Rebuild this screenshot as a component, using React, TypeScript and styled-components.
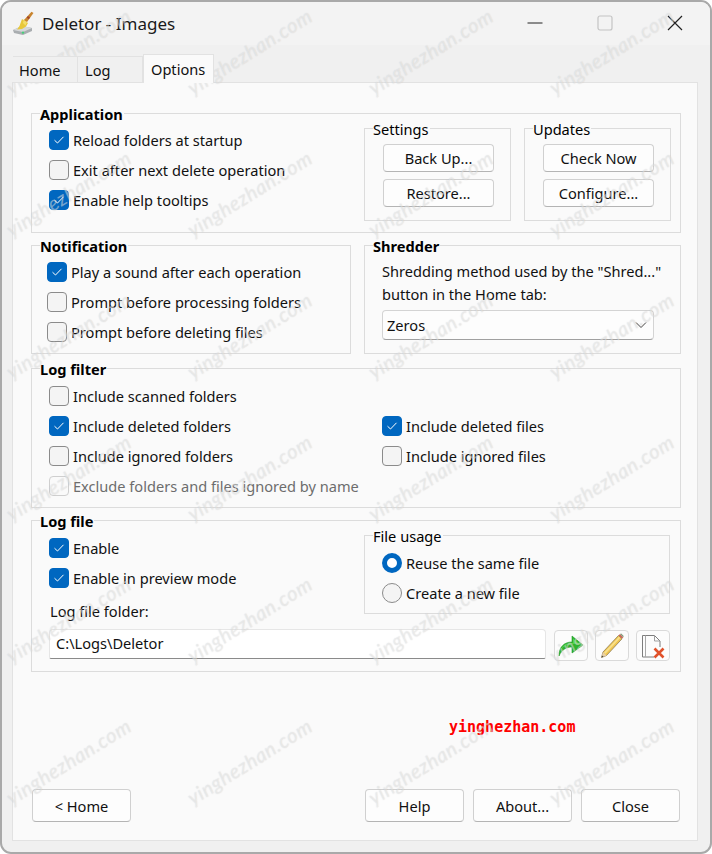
import React from 'react';
import styled, { createGlobalStyle } from 'styled-components';

const GlobalStyle = createGlobalStyle`
  html, body {
    margin: 0;
    padding: 0;
    background: #fff;
  }
  * {
    box-sizing: border-box;
  }
`;

const Window = styled.div`
  position: relative;
  width: 712px;
  height: 854px;
  display: flex;
  flex-direction: column;
  overflow: hidden;
  background: #f0f0f0;
  border: 2px solid #a9a9a9;
  border-radius: 11px;
  font-family: 'Noto Sans', 'Liberation Sans', sans-serif;
  font-size: 14.6px;
  color: #111;
`;

const TitleBar = styled.div`
  height: 43px;
  flex: none;
  display: flex;
  align-items: center;
  padding: 0 0 1px 10px;
  background: #f3f3f3;
`;

const Title = styled.span`
  margin-left: 6px;
  font-size: 17px;
  color: #1a1a1a;
`;

const WindowControls = styled.div`
  margin-left: auto;
  display: flex;
  align-items: center;
  padding-right: 27px;
  gap: 54px;
`;

const TabStrip = styled.div`
  height: 38px;
  flex: none;
  display: flex;
  align-items: flex-end;
  padding-left: 11px;
  margin-bottom: -1px;
`;

const Tab = styled.div<{ $active?: boolean; $width: number; $pad: number }>`
  position: relative;
  z-index: 1;
  width: ${(p) => p.$width}px;
  height: ${(p) => (p.$active ? 29 : 27)}px;
  display: flex;
  align-items: center;
  padding-left: ${(p) => p.$pad}px;
  padding-top: 1px;
  background: ${(p) => (p.$active ? '#fafafa' : '#f0f0f0')};
  border: 1px solid #e2e2e2;
  border-left: ${(p) => (p.$active ? '1px solid #e2e2e2' : '0')};
  border-bottom: ${(p) => (p.$active ? '0' : '1px solid #e2e2e2')};
  padding-bottom: ${(p) => (p.$active ? 1 : 0)}px;
`;

const Panel = styled.div`
  flex: 1;
  display: flex;
  flex-direction: column;
  margin: 0 12px 11px 10px;
  padding: 30px 16px 18px 18px;
  background: #fafafa;
  border: 1px solid #e2e2e2;
`;

const Group = styled.div<{ $height: number; $width?: number; $flex?: boolean }>`
  position: relative;
  height: ${(p) => p.$height}px;
  width: ${(p) => (p.$width ? `${p.$width}px` : 'auto')};
  border: 1px solid #dcdcdc;
  flex: ${(p) => (p.$flex ? 1 : 'none')};
`;

const GroupTitle = styled.span<{ $bold?: boolean }>`
  position: absolute;
  top: -10px;
  left: 8px;
  padding-right: 1px;
  line-height: 20px;
  background: #fafafa;
  font-weight: ${(p) => (p.$bold ? 700 : 400)};
  color: #000;
`;

const Spaced = styled.div<{ $top: number }>`
  margin-top: ${(p) => p.$top}px;
`;

const SplitRow = styled.div<{ $gap: number }>`
  display: flex;
  gap: ${(p) => p.$gap}px;
`;

const ApplicationBody = styled.div`
  display: flex;
  justify-content: space-between;
  padding: 14px 9px 0 17px;
`;

const SubGroups = styled.div`
  display: flex;
  gap: 13px;
`;

const CheckList = styled.div<{ $left?: number; $top?: number }>`
  display: flex;
  flex-direction: column;
  gap: 10px;
  padding: ${(p) => p.$top ?? 16}px 0 0 ${(p) => p.$left ?? 17}px;
`;

const Row = styled.label<{ $disabled?: boolean }>`
  display: flex;
  align-items: center;
  height: 20px;
  gap: 4px;
  white-space: nowrap;
  color: ${(p) => (p.$disabled ? '#6d6d6d' : '#111')};
`;

const Box = styled.span<{ $checked?: boolean; $disabled?: boolean }>`
  width: 20px;
  height: 20px;
  flex: none;
  display: flex;
  align-items: center;
  justify-content: center;
  border-radius: 4px;
  background: ${(p) => (p.$checked ? '#0067c0' : p.$disabled ? '#fafafa' : '#f4f4f4')};
  border: 1px solid ${(p) => (p.$checked ? '#0067c0' : p.$disabled ? '#cfcfcf' : '#8b8b8b')};
`;

const Radio = styled.span<{ $checked?: boolean }>`
  width: 20px;
  height: 20px;
  flex: none;
  border-radius: 50%;
  background: ${(p) => (p.$checked ? '#fff' : '#f4f4f4')};
  border: ${(p) => (p.$checked ? '5.5px solid #0067c0' : '1px solid #8b8b8b')};
`;

const StackButtons = styled.div`
  display: flex;
  flex-direction: column;
  gap: 7px;
  padding: 15px 16px 0 18px;
`;

const PushButton = styled.button<{ $width: number; $height: number }>`
  width: ${(p) => p.$width}px;
  height: ${(p) => p.$height}px;
  padding: 0;
  background: #fdfdfd;
  border: 1px solid #d0d0d0;
  border-bottom-color: #b4b4b4;
  border-radius: 4px;
  font: inherit;
  color: #111;
`;

const ShredderBody = styled.div`
  padding: 14px 0 0 17px;
`;

const Paragraph = styled.div`
  line-height: 23px;
  white-space: nowrap;
`;

const Select = styled.div`
  width: 272px;
  height: 30px;
  margin-top: 4px;
  display: flex;
  align-items: center;
  justify-content: space-between;
  padding: 0 6px 0 4px;
  background: #fdfdfd;
  border: 1px solid #d4d4d4;
  border-bottom-color: #a0a0a0;
  border-radius: 4px;
`;

const FilterGrid = styled.div`
  display: grid;
  grid-template-columns: 333px 1fr;
  row-gap: 10px;
  padding: 17px 0 0 17px;
`;

const WideCell = styled.div`
  grid-column: 1 / -1;
`;

const LogFileTop = styled.div`
  display: flex;
  justify-content: space-between;
  padding: 14px 10px 0 17px;
`;

const LogFileLeft = styled.div`
  display: flex;
  flex-direction: column;
  gap: 10px;
  padding-top: 3px;
`;

const FolderLabel = styled.div`
  margin: 3px 0 0 1px;
  line-height: 20px;
`;

const RadioList = styled.div`
  display: flex;
  flex-direction: column;
  gap: 10px;
  padding: 17px 0 0 17px;
`;

const FolderRow = styled.div`
  display: flex;
  align-items: flex-start;
  margin-top: 8px;
  padding-left: 17px;
`;

const PathInput = styled.div`
  width: 497px;
  height: 30px;
  margin-right: 8px;
  display: flex;
  align-items: center;
  padding: 0 0 3px 6px;
  background: #fff;
  border: 1px solid #e6e6e6;
  border-bottom: 1px solid #8a8a8a;
  border-radius: 4px 4px 2px 2px;
`;

const IconButtons = styled.div`
  display: flex;
  gap: 7px;
  margin-top: 1px;
`;

const IconButton = styled.button`
  width: 34px;
  height: 31px;
  padding: 0;
  display: flex;
  align-items: center;
  justify-content: center;
  background: #fcfcfc;
  border: 1px solid #dadada;
  border-radius: 4px;
`;

const Footer = styled.div`
  margin: auto 1px 0;
  display: flex;
  gap: 9px;
`;

const FooterSpacer = styled.div`
  flex: 1;
`;

const SiteStamp = styled.span`
  position: absolute;
  left: 447px;
  top: 715px;
  font-family: 'DejaVu Sans Mono', 'Liberation Mono', monospace;
  font-size: 15px;
  font-weight: 700;
  line-height: 20px;
  color: #f00;
`;

const Watermarks = styled.div`
  position: absolute;
  left: -24px;
  top: -22px;
  display: grid;
  grid-template-columns: repeat(4, 181px);
  grid-auto-rows: 142px;
  place-items: center;
  pointer-events: none;
`;

const Mark = styled.span`
  display: block;
  transform: rotate(-32deg);
  font-family: 'Lato', 'Noto Sans', sans-serif;
  font-style: italic;
  font-size: 20px;
  line-height: 1;
  letter-spacing: 0.6px;
  white-space: nowrap;
  color: rgba(255, 255, 255, 0.4);
  text-shadow: 0 0 1px rgba(130, 130, 130, 0.3);
`;

const Check = ({ checked, disabled, children }: { checked?: boolean; disabled?: boolean; children: React.ReactNode }) => (
  <Row $disabled={disabled}>
    <Box $checked={checked} $disabled={disabled}>
      {checked && (
        <svg width="12" height="10" viewBox="0 0 12 10" fill="none">
          <path d="M1.5 5.2 L4.5 8 L10.5 1.8" stroke="#fff" strokeWidth="1" />
        </svg>
      )}
    </Box>
    {children}
  </Row>
);

const BroomIcon = () => (
  <svg width="24" height="24" viewBox="0 0 24 24">
    <path d="M1 19 L10 15 L20 17 L20 20 L11 24 L2 22 Z" fill="#a9adb0" />
    <path d="M1 19 L10 15 L20 17 L11 21 Z" fill="#d6d8da" />
    <circle cx="11" cy="21.6" r="1.2" fill="#45d07a" />
    <path d="M10 8 L16 12 L14 15.5 L10 18 L5 18.5 L7.5 15 Z" fill="#e8c83a" />
    <path d="M12 8 L15 11 L13.5 14.5 L11 12 Z" fill="#f3dd6a" />
    <path d="M12 9 L19.5 0.8 L21.5 2 L15 11 Z" fill="#c8842f" />
    <path d="M16 5 L18 6.5 L16.8 8.2 L14.6 6.6 Z" fill="#a5482a" />
  </svg>
);

const GoIcon = () => (
  <svg width="26" height="22" viewBox="0 0 26 22">
    <path d="M1 21 C1 12 6 7 14 7 L14 1 L25 10 L14 18 L14 12 C9 12 4 14 1 21 Z" fill="#2fb52f" stroke="#1f9a2a" strokeWidth="0.6" />
    <path d="M3 15 C5 9 9 8 15 8 L15 3.5 L23 10 L17 9 C11 9 6 10 3 15 Z" fill="#55d44c" />
  </svg>
);

const PencilIcon = () => (
  <svg width="24" height="26" viewBox="0 0 24 26">
    <path d="M1.5 24.5 L3 19 L18.5 2.5 L22 5.8 L6.5 22.5 Z" fill="#f0c650" stroke="#8f7c55" strokeWidth="0.8" />
    <path d="M4 19.5 L19 3.8 L20.2 5 L5.5 20.8 Z" fill="#f8e08c" />
    <path d="M1.5 24.5 L3 19 L6.5 22.5 Z" fill="#e8d0a8" />
    <path d="M1.5 24.5 L2.1 22.4 L3.6 23.8 Z" fill="#444" />
    <path d="M18.5 2.5 L20 1 L23.3 4.3 L22 5.8 Z" fill="#c96a5a" />
    <path d="M20 1 L21.2 0.5 L23.7 3 L23.3 4.3 Z" fill="#7d9a78" />
  </svg>
);

const FileDeleteIcon = () => (
  <svg width="24" height="26" viewBox="0 0 24 26" fill="none">
    <path d="M1.5 2.5 H13.5 L19 8 V14 M13 24 H1.5 V2.5" stroke="#7d7d7d" strokeWidth="1" />
    <path d="M4.5 2.5 V24" stroke="#a8a8a8" strokeWidth="1" />
    <path d="M13.5 2.5 V8 H19" stroke="#a0a0a0" strokeWidth="1" />
    <path d="M13.5 15.5 L22.5 24.5 M22.5 15.5 L13.5 24.5" stroke="#e0512a" strokeWidth="2.6" />
  </svg>
);

const App = () => {
  return (
    <>
      <GlobalStyle />
      <Window>
        <TitleBar>
          <BroomIcon />
          <Title>Deletor - Images</Title>
          <WindowControls>
            <svg width="16" height="16" viewBox="0 0 16 16">
              <path d="M0.5 8 H15.5" stroke="#222" strokeWidth="1" />
            </svg>
            <svg width="16" height="16" viewBox="0 0 16 16" fill="none">
              <rect x="1" y="1" width="14" height="14" rx="2" stroke="#c4c4c4" strokeWidth="1.2" />
            </svg>
            <svg width="16" height="16" viewBox="0 0 16 16">
              <path d="M1 1 L15 15 M15 1 L1 15" stroke="#222" strokeWidth="1.2" />
            </svg>
          </WindowControls>
        </TitleBar>

        <TabStrip>
          <Tab $width={65} $pad={6}>Home</Tab>
          <Tab $width={65} $pad={7}>Log</Tab>
          <Tab $width={71} $pad={7} $active>Options</Tab>
        </TabStrip>

        <Panel>
          <Group $height={120}>
            <GroupTitle $bold>Application</GroupTitle>
            <ApplicationBody>
              <CheckList $left={0} $top={2}>
                <Check checked>Reload folders at startup</Check>
                <Check>Exit after next delete operation</Check>
                <Check checked>Enable help tooltips</Check>
              </CheckList>
              <SubGroups>
                <Group $height={93}>
                  <GroupTitle>Settings</GroupTitle>
                  <StackButtons>
                    <PushButton $width={111} $height={28}>Back Up...</PushButton>
                    <PushButton $width={111} $height={28}>Restore...</PushButton>
                  </StackButtons>
                </Group>
                <Group $height={93}>
                  <GroupTitle>Updates</GroupTitle>
                  <StackButtons>
                    <PushButton $width={111} $height={28}>Check Now</PushButton>
                    <PushButton $width={111} $height={28}>Configure...</PushButton>
                  </StackButtons>
                </Group>
              </SubGroups>
            </ApplicationBody>
          </Group>

          <Spaced $top={12}>
            <SplitRow $gap={13}>
              <Group $height={109} $width={320}>
                <GroupTitle $bold>Notification</GroupTitle>
                <CheckList $left={15}>
                  <Check checked>Play a sound after each operation</Check>
                  <Check>Prompt before processing folders</Check>
                  <Check>Prompt before deleting files</Check>
                </CheckList>
              </Group>
              <Group $height={109} $flex>
                <GroupTitle $bold>Shredder</GroupTitle>
                <ShredderBody>
                  <Paragraph>
                    Shredding method used by the "Shred..."
                    <br />
                    button in the Home tab:
                  </Paragraph>
                  <Select>
                    Zeros
                    <svg width="12" height="8" viewBox="0 0 12 8" fill="none">
                      <path d="M1 1.5 L6 6.5 L11 1.5" stroke="#444" strokeWidth="1" />
                    </svg>
                  </Select>
                </ShredderBody>
              </Group>
            </SplitRow>
          </Spaced>

          <Spaced $top={14}>
            <Group $height={140}>
              <GroupTitle $bold>Log filter</GroupTitle>
              <FilterGrid>
                <WideCell>
                  <Check>Include scanned folders</Check>
                </WideCell>
                <Check checked>Include deleted folders</Check>
                <Check checked>Include deleted files</Check>
                <Check>Include ignored folders</Check>
                <Check>Include ignored files</Check>
                <WideCell>
                  <Check disabled>Exclude folders and files ignored by name</Check>
                </WideCell>
              </FilterGrid>
            </Group>
          </Spaced>

          <Spaced $top={12}>
            <Group $height={152}>
              <GroupTitle $bold>Log file</GroupTitle>
              <LogFileTop>
                <LogFileLeft>
                  <Check checked>Enable</Check>
                  <Check checked>Enable in preview mode</Check>
                  <FolderLabel>Log file folder:</FolderLabel>
                </LogFileLeft>
                <Group $height={79} $width={306}>
                  <GroupTitle>File usage</GroupTitle>
                  <RadioList>
                    <Row>
                      <Radio $checked />
                      Reuse the same file
                    </Row>
                    <Row>
                      <Radio />
                      Create a new file
                    </Row>
                  </RadioList>
                </Group>
              </LogFileTop>
              <FolderRow>
                <PathInput>C:\Logs\Deletor</PathInput>
                <IconButtons>
                  <IconButton><GoIcon /></IconButton>
                  <IconButton><PencilIcon /></IconButton>
                  <IconButton><FileDeleteIcon /></IconButton>
                </IconButtons>
              </FolderRow>
            </Group>
          </Spaced>

          <Footer>
            <PushButton $width={99} $height={33}>&lt; Home</PushButton>
            <FooterSpacer />
            <PushButton $width={99} $height={33}>Help</PushButton>
            <PushButton $width={99} $height={33}>About...</PushButton>
            <PushButton $width={99} $height={33}>Close</PushButton>
          </Footer>
        </Panel>

        <SiteStamp>yinghezhan.com</SiteStamp>
        <Watermarks>
          {Array.from({ length: 24 }, (_, i) => (
            <Mark key={i}>yinghezhan.com</Mark>
          ))}
        </Watermarks>
      </Window>
    </>
  );
};

export default App;
